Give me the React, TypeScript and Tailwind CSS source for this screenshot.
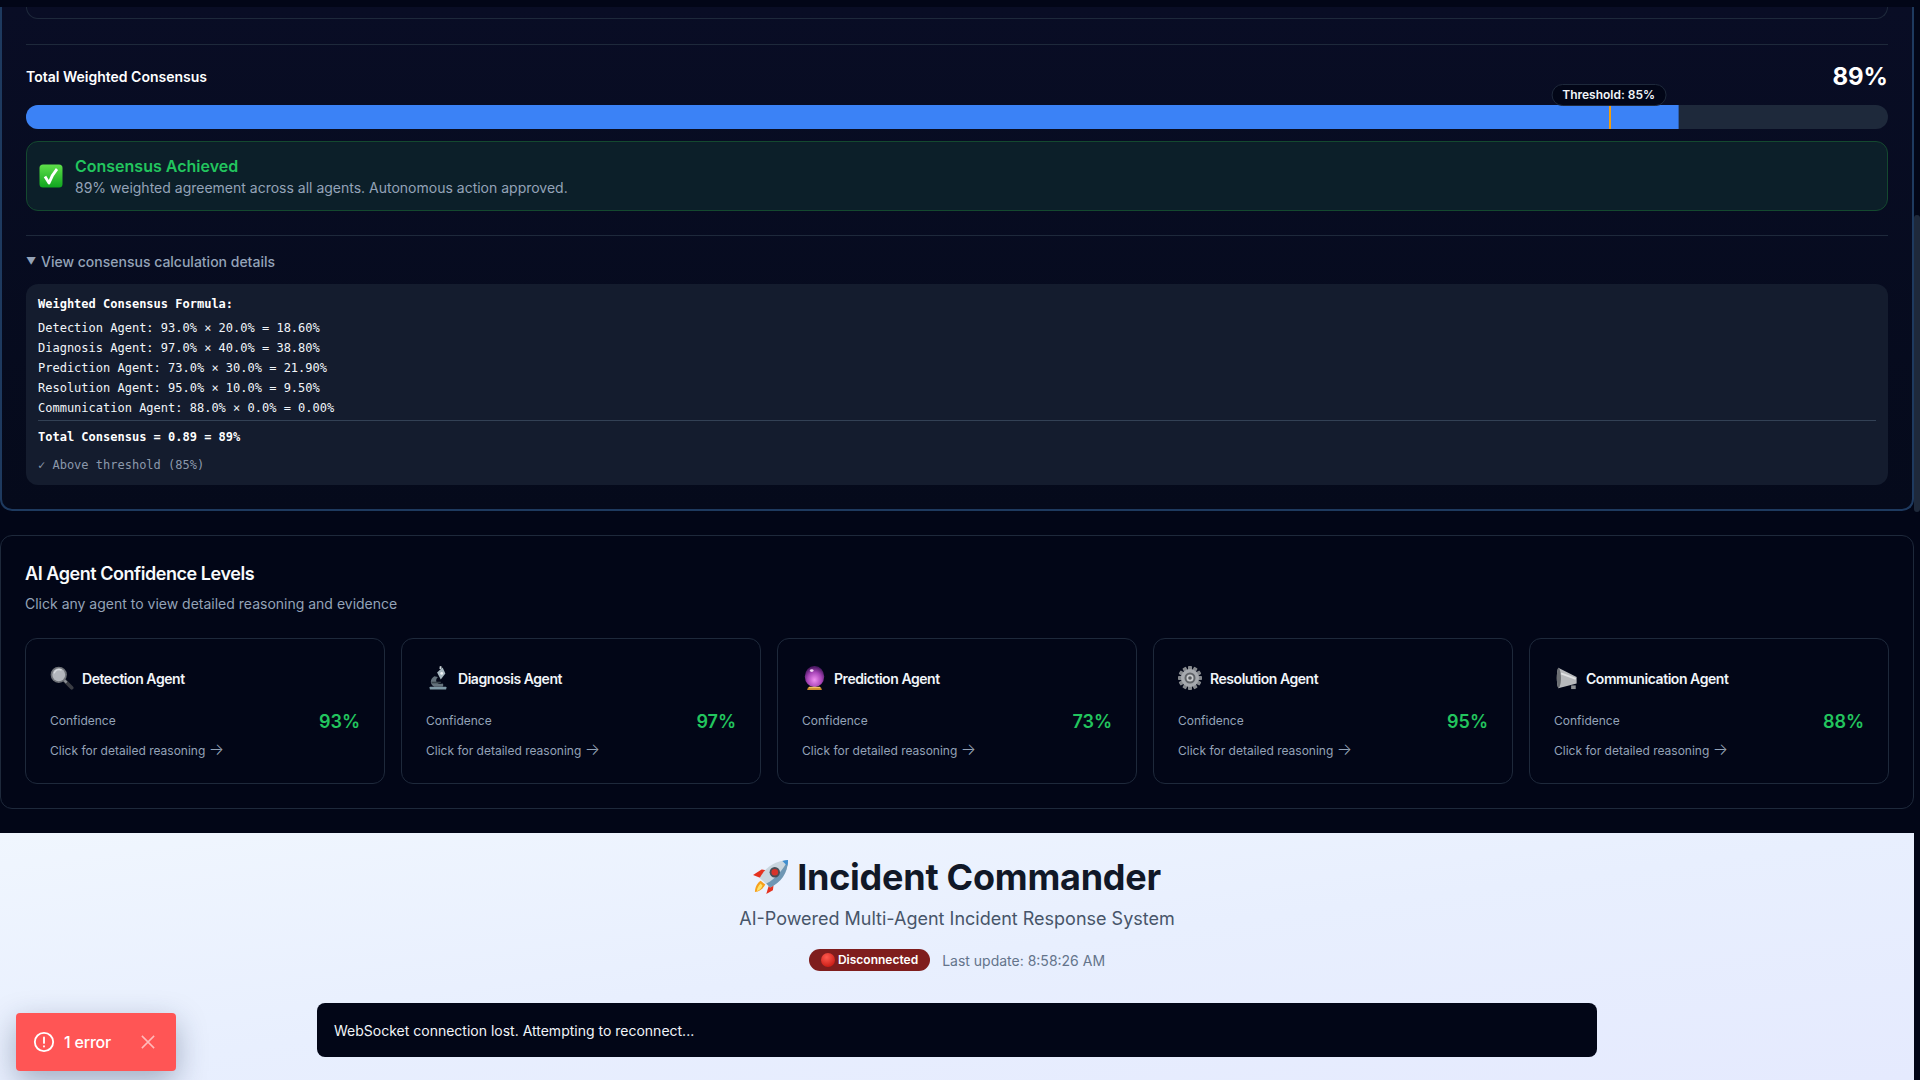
import React from "react";

const sans = "font-['Inter','Liberation_Sans',sans-serif]";

function CheckEmoji() {
    return (
        <svg width="24" height="24" viewBox="0 0 24 24" className="shrink-0">
            <defs>
                <linearGradient id="chk" x1="0" y1="0" x2="0" y2="1">
                    <stop offset="0" stopColor="#5fe04a" />
                    <stop offset="1" stopColor="#0fa51f" />
                </linearGradient>
            </defs>
            <rect x="0.5" y="0.5" width="23" height="23" rx="3.5" fill="url(#chk)" />
            <path d="M6 12.5l4 6.5c2-5.5 4.5-10 8-14" fill="none" stroke="#fff" strokeWidth="2.8" strokeLinejoin="round" />
        </svg>
    );
}

function SearchEmoji() {
    return (
        <svg width="24" height="24" viewBox="0 0 26 26">
            <path d="M16 16l7.5 7.5" stroke="#3b3d44" strokeWidth="4" strokeLinecap="round" />
            <path d="M15 15l3 3" stroke="#8c8f96" strokeWidth="2.5" />
            <circle cx="9.5" cy="9.5" r="8.8" fill="#6f7278" />
            <circle cx="9.5" cy="9.5" r="7" fill="#b3b6bc" />
            <path d="M4.5 8a5.5 5.5 0 0 1 8-3.5" stroke="#d8dade" strokeWidth="1.5" fill="none" />
        </svg>
    );
}

function MicroscopeEmoji() {
    return (
        <svg width="20" height="24" viewBox="0 0 20 26">
            <rect x="1" y="22.5" width="18" height="3" rx="0.5" fill="#7f99a6" />
            <path d="M6 11c-5 3-5 9 0 11.5h9c1-1.500 1-2.500 0-3.500-3 1-7 0-7-3 0-2 1-3 2-4z" fill="#64727c" />
            <path d="M9 7l6-5.500 3 6.500-5 6.500z" fill="#a8b8c0" />
            <path d="M12 0l2 .5-.5 3-2-.5z" fill="#cfd8dc" />
            <circle cx="14" cy="8" r="1.500" fill="#eef2f4" />
            <rect x="3" y="17" width="10" height="1.800" fill="#39444c" />
        </svg>
    );
}

function CrystalEmoji() {
    return (
        <svg width="21" height="24" viewBox="0 0 22 26">
            <defs>
                <radialGradient id="ball" cx="0.5" cy="0.65" r="0.6">
                    <stop offset="0" stopColor="#ef8ef0" />
                    <stop offset="0.6" stopColor="#a845b8" />
                    <stop offset="1" stopColor="#4f1a66" />
                </radialGradient>
            </defs>
            <ellipse cx="11" cy="11.500" rx="10.500" ry="11.500" fill="url(#ball)" />
            <ellipse cx="8" cy="5" rx="2" ry="1.500" fill="#f2d4f4" />
            <path d="M4 23h14l1 3H3z" fill="#c98a2c" />
            <rect x="5" y="22.500" width="12" height="1.500" fill="#f0c060" />
        </svg>
    );
}

function GearEmoji() {
    return (
        <svg width="24" height="24" viewBox="0 0 24 24">
            <g fill="#85888d">
                {[0, 30, 60, 90, 120, 150].map((a) => (
                    <rect key={a} x="10" y="0" width="4" height="24" rx="0.800" transform={`rotate(${a} 12 12)`} />
                ))}
            </g>
            <circle cx="12" cy="12" r="9" fill="#a6a9ae" />
            <circle cx="12" cy="12" r="5.500" fill="#5f6267" />
            <circle cx="12" cy="12" r="3.500" fill="#c8cacd" />
            <circle cx="12" cy="12" r="1.800" fill="#55585c" />
        </svg>
    );
}

function MegaphoneEmoji() {
    return (
        <svg width="23" height="24" viewBox="0 0 24 26">
            <path d="M3 2l20 10v7L3 24c-2-5-2-17 0-22z" fill="#b8babd" />
            <path d="M3 2c1.500 0 3 5 3 11s-1.500 11-3 11c-2-5-2-17 0-22z" fill="#6b6e72" />
            <path d="M6 8l16 6" stroke="#e2e3e5" strokeWidth="2" />
            <path d="M17 21h5v4h-5z" fill="#8d9094" />
        </svg>
    );
}

function RocketEmoji() {
    return (
        <svg width="36" height="34" viewBox="0 0 38 36" className="shrink-0">
            <path d="M0 16l9-6 6 1-7 8z" fill="#e5321f" />
            <path d="M14 36l3-10 5-2-1 8z" fill="#e5321f" />
            <path d="M2 34c0-6 3-10 6-12l5 4c-2 4-6 7-11 8z" fill="#f7a01c" />
            <path d="M4 33c0-3 2-6 4-8l2 2c-1 3-3 5-6 6z" fill="#fde36a" />
            <path d="M7 19C12 9 22 1 37 0c0 14-8 24-19 29z" fill="#c9d6df" />
            <path d="M37 0c0 14-8 24-19 29l-4-4C24 20 32 10 37 0z" fill="#6f97b4" />
            <circle cx="23" cy="13" r="5.500" fill="#4a4f58" />
            <circle cx="23" cy="13" r="3.500" fill="#d8332a" />
            <path d="M31 1c2-.500 4-.800 6-1 0 2-.200 4-.800 6z" fill="#3e8ed0" />
        </svg>
    );
}

function RedDot() {
    return (
        <svg width="14" height="14" viewBox="0 0 14 14" className="shrink-0">
            <defs>
                <radialGradient id="red" cx="0.4" cy="0.3" r="0.8">
                    <stop offset="0" stopColor="#ff5a4f" />
                    <stop offset="1" stopColor="#c4150f" />
                </radialGradient>
            </defs>
            <circle cx="7" cy="7" r="7" fill="url(#red)" />
        </svg>
    );
}

const agents = [
    { name: "Detection Agent", pct: "93%", icon: <SearchEmoji /> },
    { name: "Diagnosis Agent", pct: "97%", icon: <MicroscopeEmoji /> },
    { name: "Prediction Agent", pct: "73%", icon: <CrystalEmoji /> },
    { name: "Resolution Agent", pct: "95%", icon: <GearEmoji /> },
    { name: "Communication Agent", pct: "88%", icon: <MegaphoneEmoji /> },
];

const formulaLines = [
    "Detection Agent: 93.0% × 20.0% = 18.60%",
    "Diagnosis Agent: 97.0% × 40.0% = 38.80%",
    "Prediction Agent: 73.0% × 30.0% = 21.90%",
    "Resolution Agent: 95.0% × 10.0% = 9.50%",
    "Communication Agent: 88.0% × 0.0% = 0.00%",
];

function AgentCard({ agent }: { agent: (typeof agents)[number] }) {
    return (
        <div className="rounded-xl border border-[#1e293b] pt-[26px] px-[24px] h-[146px]">
            <div className="flex items-center gap-2 h-[26px]">
                <span className="w-6 flex justify-center shrink-0">{agent.icon}</span>
                <span className="text-[14px] font-semibold text-[#f1f5f9] tracking-[-0.45px]">{agent.name}</span>
            </div>
            <div className="flex items-center justify-between mt-[18px] h-[24px]">
                <span className="text-[12px] text-[#94a3b8]">Confidence</span>
                <span className="text-[18px] font-semibold text-[#22c55e]">{agent.pct}</span>
            </div>
            <div className="text-[12px] leading-[16px] h-[16px] text-[#94a3b8] mt-[8px]">
                Click for detailed reasoning <span className="text-[16px] leading-[16px] font-light">→</span>
            </div>
        </div>
    );
}

export default function App() {
    return (
        <div className={`h-screen w-screen overflow-hidden bg-[#020617] relative flex flex-col ${sans}`}>
            {/* Scrollbar */}
            <div className="absolute right-0 top-[215px] w-[6px] h-[297px] bg-[#1e293b] rounded-[3px]" />

            <div className="w-[1914px] flex flex-col">
                <div className="h-[7px]" />

                {/* Consensus panel */}
                <div className="h-[504px] bg-gradient-to-b from-[#090d25] to-[#050a1b] border-x-2 border-b-2 border-[#1e3a5f] rounded-b-xl px-[24px]">
                    <div className="h-[12px] border-x border-b border-[#1e293b] rounded-b-xl" />
                    <div className="h-px bg-[#1e293b] mt-[25px]" />

                    <div className="flex items-center justify-between mt-[14px] h-[36px]">
                        <span className="text-[14px] font-semibold text-white -mt-[2px]">Total Weighted Consensus</span>
                        <span className="text-[24px] font-bold text-white">89%</span>
                    </div>

                    <div className="relative h-6 mt-[10px] rounded-xl bg-[#1e293b]">
                        <div className="h-full w-[88.8%] bg-[#3b82f6] rounded-l-xl border-r border-[#2f5fae]" />
                        <div className="absolute left-[85%] top-0 h-full w-[2px] bg-[#f59e0b]" />
                        <div className="absolute left-[85%] -translate-x-1/2 -top-[21px] h-[22px] px-[10px] flex items-center whitespace-nowrap rounded-full bg-[#020617] border border-[#1e293b] text-[12px] font-semibold text-[#f1f5f9]">
                            Threshold: 85%
                        </div>
                    </div>

                    <div className="flex items-center gap-3 h-[70px] mt-[12px] rounded-xl border border-[#14492f] bg-[#0c1f29] px-[12px]">
                        <CheckEmoji />
                        <div>
                            <div className="text-[16px] leading-[24px] font-semibold text-[#22c55e]">Consensus Achieved</div>
                            <div className="text-[14px] leading-[20px] text-[#94a3b8]">
                                89% weighted agreement across all agents. Autonomous action approved.
                            </div>
                        </div>
                    </div>

                    <div className="h-px bg-[#1e293b] mt-[24px]" />

                    <div className="flex items-center gap-[5px] mt-[15px] h-[20px] text-[14px] font-medium text-[#94a3b8]">
                        <span className="text-[10px] w-[10px]">▼</span>
                        View consensus calculation details
                    </div>

                    {/* Formula */}
                    <div className="mt-[13px] h-[201px] rounded-xl bg-[#141c2e] px-[12px] pt-[12px] font-['DejaVu_Sans_Mono','Liberation_Mono',monospace] text-[12px] text-[#f1f5f9]">
                        <div className="font-bold text-white leading-[16px] mb-[6px]">Weighted Consensus Formula:</div>
                        {formulaLines.map((line) => (
                            <div key={line} className="leading-[20px]">{line}</div>
                        ))}
                        <div className="h-px bg-[#334155] mt-[2px]" />
                        <div className="font-bold text-white leading-[16px] mt-[8px]">Total Consensus = 0.89 = 89%</div>
                        <div className="text-[#8b98ab] leading-[16px] mt-[12px]">✓ Above threshold (85%)</div>
                    </div>
                </div>

                {/* Agent confidence */}
                <div className="mt-[24px] h-[274px] rounded-xl border border-[#1e293b] bg-[#020617] px-[24px] pt-[24px]">
                    <div className="text-[18px] leading-[28px] font-semibold text-[#f8fafc] tracking-[-0.45px]">AI Agent Confidence Levels</div>
                    <div className="text-[14px] leading-[20px] text-[#94a3b8] mt-[6px]">
                        Click any agent to view detailed reasoning and evidence
                    </div>
                    <div className="grid grid-cols-5 gap-4 mt-[24px]">
                        {agents.map((a) => (
                            <AgentCard key={a.name} agent={a} />
                        ))}
                    </div>
                </div>

                {/* Header */}
                <div className="mt-[24px] h-[247px] bg-gradient-to-br from-[#f0f6fe] via-[#e8effe] to-[#e5eafe] flex flex-col items-center">
                    <div className="flex items-center gap-2 mt-[24px] h-[40px]">
                        <RocketEmoji />
                        <span className="text-[36px] font-bold text-[#111827] leading-[40px] tracking-[-0.25px]">Incident Commander</span>
                    </div>
                    <div className="text-[18px] leading-[28px] text-[#475569] mt-[8px]">AI-Powered Multi-Agent Incident Response System</div>
                    <div className="flex items-center gap-3 mt-[16px] h-[22px]">
                        <div className="flex items-center gap-[3px] h-[22px] px-[12px] rounded-full bg-[#7f1d1d] text-[12px] font-semibold text-white">
                            <RedDot />
                            Disconnected
                        </div>
                        <span className="text-[14px] text-[#64748b]">Last update: 8:58:26 AM</span>
                    </div>
                    <div className="w-[1280px] h-[54px] mt-[32px] shrink-0 rounded-lg bg-[#020617] flex items-center px-[17px] text-[14px] text-[#f1f5f9]">
                        WebSocket connection lost. Attempting to reconnect...
                    </div>
                </div>
            </div>

            {/* Next.js error toast */}
            <div className="absolute left-[16px] top-[1013px] w-[160px] h-[58px] rounded bg-[#ff5555] shadow-[0_10px_30px_rgba(30,50,80,0.35)] flex items-center pl-[17px] text-white">
                <svg width="22" height="22" viewBox="0 0 24 24" fill="none" stroke="currentColor" strokeWidth="2" strokeLinecap="round">
                    <circle cx="12" cy="12" r="10" />
                    <path d="M12 7v6" />
                    <path d="M12 16.500v.5" />
                </svg>
                <span className="ml-[9px] text-[16px] font-medium tracking-[-0.2px]">1 error</span>
                <svg className="ml-[30px] opacity-60" width="14" height="14" viewBox="0 0 16 16" fill="none" stroke="currentColor" strokeWidth="1.700">
                    <path d="M1 1l14 14M15 1L1 15" />
                </svg>
            </div>
        </div>
    );
}
